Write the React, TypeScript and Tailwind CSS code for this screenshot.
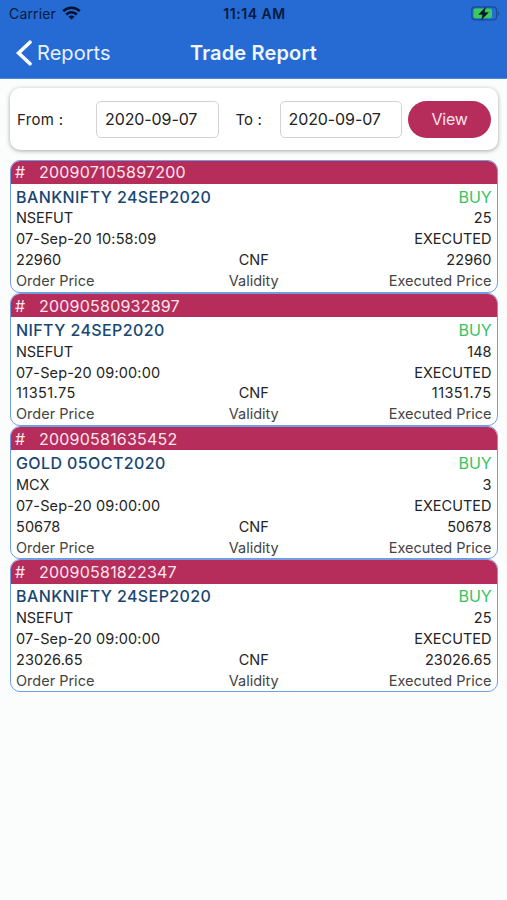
type Trade = {
  id: string;
  symbol: string;
  exchange: string;
  qty: string;
  time: string;
  price: string;
};

const trades: Trade[] = [
  { id: "200907105897200", symbol: "BANKNIFTY 24SEP2020", exchange: "NSEFUT", qty: "25", time: "07-Sep-20 10:58:09", price: "22960" },
  { id: "20090580932897", symbol: "NIFTY 24SEP2020", exchange: "NSEFUT", qty: "148", time: "07-Sep-20 09:00:00", price: "11351.75" },
  { id: "20090581635452", symbol: "GOLD 05OCT2020", exchange: "MCX", qty: "3", time: "07-Sep-20 09:00:00", price: "50678" },
  { id: "20090581822347", symbol: "BANKNIFTY 24SEP2020", exchange: "NSEFUT", qty: "25", time: "07-Sep-20 09:00:00", price: "23026.65" },
];

function StatusBar() {
  return (
    <div className="grid h-[27px] grid-cols-3 items-center pl-[9px] pr-[7px] text-[#071a3c]">
      <div className="flex items-center gap-[6px]">
        <span className="text-[14px] tracking-[0.15px]">Carrier</span>
        <svg className="-mt-px" width="19" height="14" viewBox="0 0 19 14" fill="none" stroke="#04122c" strokeWidth="2.6">
          <path d="M1.2 5.2a11.8 11.8 0 0 1 16.6 0" />
          <path d="M4.2 8.5a7.5 7.5 0 0 1 10.6 0" />
          <path d="M9.5 13.6 6.5 10.8a4.2 4.2 0 0 1 6 0Z" fill="#04122c" stroke="none" />
        </svg>
      </div>
      <span className="text-center text-[14px] font-semibold tracking-[0.55px]">11:14 AM</span>
      <svg className="-mt-px justify-self-end" width="30" height="15" viewBox="0 0 30 15">
        <rect x="1.8" y="0.9" width="24.8" height="13" rx="3.4" fill="none" stroke="#194b91" strokeWidth="1.2" />
        <rect x="3.5" y="2.6" width="18.5" height="9.6" rx="2" fill="#3cc95e" />
        <path d="M28 5.3c1.8.6 1.8 3.6 0 4.2Z" fill="#194b91" />
        <path d="M15.6 1.3 8.6 8.4h4.1l-1.2 5.4 7-7.3h-4.1Z" fill="#06162d" stroke="#06162d" strokeWidth="0.3" />
      </svg>
    </div>
  );
}

function Header() {
  return (
    <header className="h-[79px] border-b border-[#4b8de0] bg-[#256bd3]">
      <StatusBar />
      <div className="grid h-[51px] grid-cols-[1fr_auto_1fr] items-center">
        <button className="flex items-center gap-[5px] pl-[15px] text-[20px] text-[#e9f1ff]">
          <svg width="17" height="26" viewBox="0 0 17 26" fill="none" stroke="white" strokeWidth="3.6" strokeLinecap="round">
            <path d="M15 2.2 3.6 13 15 23.8" />
          </svg>
          <span className="tracking-[0.05px]">Reports</span>
        </button>
        <h1 className="text-[20px] font-semibold tracking-[0.15px] text-[#f0f6ff]">Trade Report</h1>
      </div>
    </header>
  );
}

function DateField({ value }: { value: string }) {
  return (
    <div className="flex h-[37px] w-[122.5px] items-center rounded-[5px] border border-[#d3d3d3] bg-white pl-[8px] text-[16px] tracking-[-0.1px]">
      {value}
    </div>
  );
}

function Filters() {
  return (
    <section className="flex h-[62px] items-center rounded-[10px] bg-white pl-[7px] shadow-[0_1px_4px_rgba(0,0,0,0.35)]">
      <span className="w-[79px] pt-[2px] text-[15px] tracking-[0.3px]">From :</span>
      <DateField value="2020-09-07" />
      <span className="w-[61px] pl-[17px] pt-[2px] text-[15px] tracking-[0.1px]">To :</span>
      <DateField value="2020-09-07" />
      <button className="ml-[6px] h-[37px] w-[83px] rounded-full bg-[#b62d5b] text-[16px] tracking-[-0.2px] text-[#fbe3ec]">View</button>
    </section>
  );
}

function TradeCard({ trade }: { trade: Trade }) {
  const priceTracking = trade.price.startsWith("11") ? "tracking-[0.42px]" : "tracking-[0.08px]";
  return (
    <article className="h-[133.2px] overflow-hidden rounded-[10px] border border-[#6f9ee2] bg-white text-[14.5px] leading-[20.9px] text-[#242424]">
      <div className="-mx-px -mt-px flex h-[24.4px] items-center border-t border-[#694098] bg-[#b62d5b] pl-[5px] pt-px text-[16px] text-[#fde6ee]">
        <span className="w-[24px]">#</span>
        <span className="tracking-[0.22px]">{trade.id}</span>
      </div>
      <div className="px-[5px]">
        <div className="flex h-[24.5px] items-center justify-between pt-[2px] text-[16px]">
          <span className="font-medium tracking-[0.4px] text-[#184774]">{trade.symbol}</span>
          <span className="tracking-[-0.1px] text-[#34c464]">BUY</span>
        </div>
        <div className="flex justify-between">
          <span className="tracking-[-0.1px]">{trade.exchange}</span>
          <span>{trade.qty}</span>
        </div>
        <div className="flex justify-between">
          <span className="tracking-[0.14px]">{trade.time}</span>
          <span>EXECUTED</span>
        </div>
        <div className="grid grid-cols-3">
          <span className={priceTracking}>{trade.price}</span>
          <span className="text-center">CNF</span>
          <span className={`text-right ${priceTracking}`}>{trade.price}</span>
        </div>
        <div className="grid grid-cols-3 text-[#444444]">
          <span>Order Price</span>
          <span className="text-center">Validity</span>
          <span className="text-right">Executed Price</span>
        </div>
      </div>
    </article>
  );
}

export default function App() {
  return (
    <div className="min-h-[900px] bg-[#fbfdfd] font-['Inter',sans-serif] text-[#222222]">
      <Header />
      <main className="pl-[10px] pr-[9.5px] pt-[9px]">
        <Filters />
        <div className="mt-[9.6px]">
          {trades.map((trade) => (
            <TradeCard key={trade.id} trade={trade} />
          ))}
        </div>
      </main>
    </div>
  );
}
